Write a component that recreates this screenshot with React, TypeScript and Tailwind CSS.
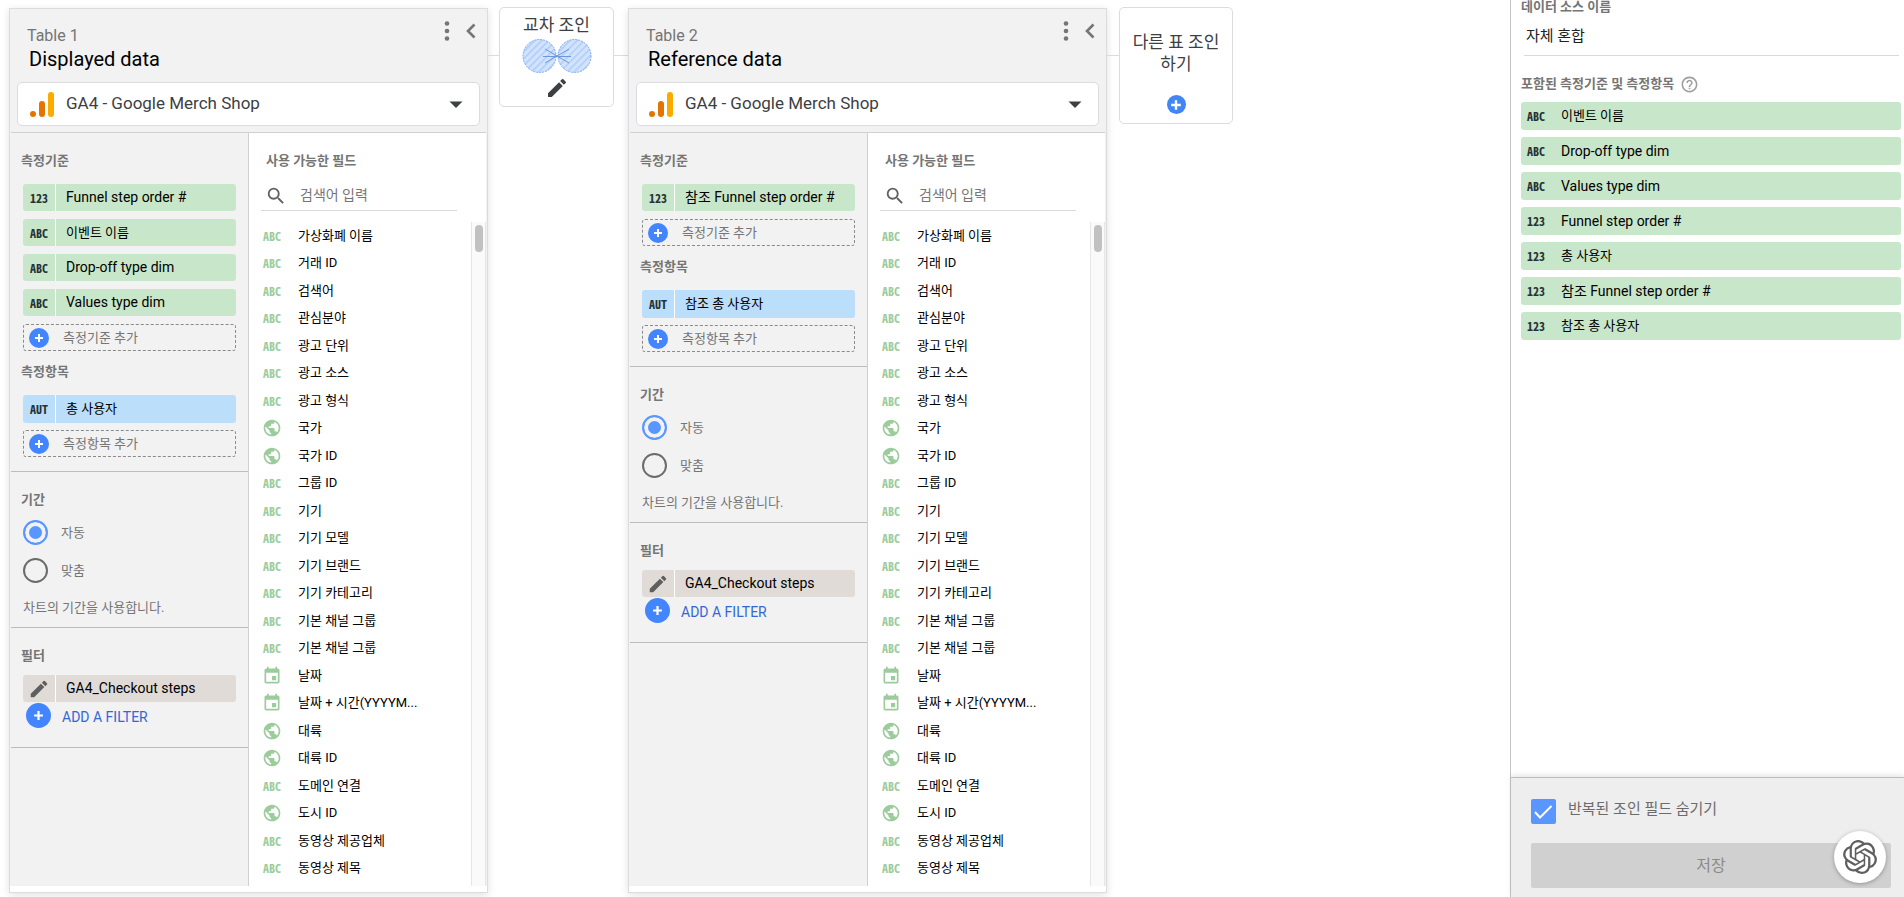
import React, { useState } from 'react';
import { MdEdit, MdEvent, MdHelpOutline, MdPublic, MdSearch } from 'react-icons/md';
import { SiOpenai } from 'react-icons/si';

type FieldType = 'ABC' | '123' | 'AUT' | 'geo' | 'date';

interface Field {
  type: FieldType;
  name: string;
}

interface BlendTable {
  id: string;
  label: string;
  name: string;
  dimensions: Field[];
  metrics: Field[];
}

const tables: BlendTable[] = [
  {
    id: 't1',
    label: 'Table 1',
    name: 'Displayed data',
    dimensions: [
      { type: '123', name: 'Funnel step order #' },
      { type: 'ABC', name: '이벤트 이름' },
      { type: 'ABC', name: 'Drop-off type dim' },
      { type: 'ABC', name: 'Values type dim' },
    ],
    metrics: [{ type: 'AUT', name: '총 사용자' }],
  },
  {
    id: 't2',
    label: 'Table 2',
    name: 'Reference data',
    dimensions: [{ type: '123', name: '참조 Funnel step order #' }],
    metrics: [{ type: 'AUT', name: '참조 총 사용자' }],
  },
];

const availableFields: Field[] = [
  { type: 'ABC', name: '가상화폐 이름' },
  { type: 'ABC', name: '거래 ID' },
  { type: 'ABC', name: '검색어' },
  { type: 'ABC', name: '관심분야' },
  { type: 'ABC', name: '광고 단위' },
  { type: 'ABC', name: '광고 소스' },
  { type: 'ABC', name: '광고 형식' },
  { type: 'geo', name: '국가' },
  { type: 'geo', name: '국가 ID' },
  { type: 'ABC', name: '그룹 ID' },
  { type: 'ABC', name: '기기' },
  { type: 'ABC', name: '기기 모델' },
  { type: 'ABC', name: '기기 브랜드' },
  { type: 'ABC', name: '기기 카테고리' },
  { type: 'ABC', name: '기본 채널 그룹' },
  { type: 'ABC', name: '기본 채널 그룹' },
  { type: 'date', name: '날짜' },
  { type: 'date', name: '날짜 + 시간(YYYYM...' },
  { type: 'geo', name: '대륙' },
  { type: 'geo', name: '대륙 ID' },
  { type: 'ABC', name: '도메인 연결' },
  { type: 'geo', name: '도시 ID' },
  { type: 'ABC', name: '동영상 제공업체' },
  { type: 'ABC', name: '동영상 제목' },
];

const includedFields: Field[] = [
  { type: 'ABC', name: '이벤트 이름' },
  { type: 'ABC', name: 'Drop-off type dim' },
  { type: 'ABC', name: 'Values type dim' },
  { type: '123', name: 'Funnel step order #' },
  { type: '123', name: '총 사용자' },
  { type: '123', name: '참조 Funnel step order #' },
  { type: '123', name: '참조 총 사용자' },
];

const nameSize = (name: string) => (/[a-z]/.test(name) ? 'text-[14px]' : 'text-[13px]');

const TypeIcon: React.FC<{ type: FieldType }> = ({ type }) => {
  if (type === 'geo') return <MdPublic className="size-5" />;
  if (type === 'date') return <MdEvent className="size-5" />;
  return (
    <span className="font-['Noto_Sans_Mono_CJK_KR','Liberation_Mono',monospace] text-[12px] leading-3 font-bold">
      {type}
    </span>
  );
};

const PlusIcon: React.FC<{ className: string }> = ({ className }) => (
  <svg viewBox="0 0 10 10" className={className} fill="none" stroke="currentColor" strokeWidth="2" aria-hidden="true">
    <path d="M5 1V9M1 5H9" />
  </svg>
);

const AnalyticsLogo: React.FC = () => (
  <svg viewBox="0 0 24 25" className="w-6 h-[25px] shrink-0" aria-hidden="true">
    <rect x="18" y="0" width="6" height="25" rx="3" fill="#f9ab00" />
    <rect x="9" y="9" width="6" height="16" rx="3" fill="#e37400" />
    <circle cx="3" cy="22" r="3" fill="#e37400" />
  </svg>
);

const VennIcon: React.FC = () => (
  <svg viewBox="0 0 70 36" className="w-[70px] h-9" aria-hidden="true">
    <defs>
      <pattern id="hatch" width="5" height="5" patternUnits="userSpaceOnUse" patternTransform="rotate(45)">
        <rect width="5" height="5" fill="#d2e3fc" />
        <rect width="1.5" height="5" fill="#aecbfa" />
      </pattern>
    </defs>
    <circle cx="17.5" cy="18" r="16.5" fill="url(#hatch)" stroke="#7baaf0" strokeDasharray="2 1" />
    <circle cx="52.5" cy="18" r="16.5" fill="url(#hatch)" stroke="#7baaf0" strokeDasharray="2 1" />
    <path d="M21 18.5H49M23 11L35 18L23 25M47 11L35 18L47 25" fill="none" stroke="#6c97dc" />
  </svg>
);

const FieldChip: React.FC<{ field: Field; className: string }> = ({ field, className }) => (
  <button type="button" className={`flex items-stretch w-full rounded-[3px] overflow-hidden text-left text-black ${className}`}>
    <span className="w-[33px] flex items-center justify-center text-[#263238] border-r border-white">
      <TypeIcon type={field.type} />
    </span>
    <span className={`flex items-center pl-[10px] whitespace-nowrap ${nameSize(field.name)}`}>{field.name}</span>
  </button>
);

const AddField: React.FC<{ label: string }> = ({ label }) => (
  <button
    type="button"
    className="flex items-center w-full h-[27px] pl-[5px] gap-[14px] border border-dashed border-[#8a8a8a] rounded-[3px] text-[13px] text-[#757575]"
  >
    <span className="size-5 rounded-full bg-[#4285ff] text-white flex items-center justify-center">
      <PlusIcon className="size-[10px]" />
    </span>
    {label}
  </button>
);

const SectionTitle: React.FC<{ children: React.ReactNode }> = ({ children }) => (
  <h3 className="-ml-[2px] text-[13px] leading-5 font-bold text-[#757575]">{children}</h3>
);

const radioClass =
  'appearance-none size-[25px] rounded-full border-2 border-[#6b6b6b] checked:border-[#5a96ff] checked:bg-[#5a96ff] checked:shadow-[inset_0_0_0_4px_#f2f2f2]';

const TableCard: React.FC<{ table: BlendTable }> = ({ table }) => {
  const [name, setName] = useState(table.name);
  const [range, setRange] = useState('auto');
  const [search, setSearch] = useState('');

  return (
    <section className="w-[479px] shrink-0 mt-px border border-[#dadce0] bg-[#f2f2f2] shadow-[0_2px_8px_rgba(0,0,0,0.12)]">
      <div className="px-px">
        <header className="border-b border-[#d0d0d0] px-[6px] pb-[6px]">
          <div className="flex justify-between pl-[10px]">
            <div className="pt-[17px] pb-[11px]">
              <p className="text-[16px] leading-5 text-[#757575]">{table.label}</p>
              <input
                aria-label="Table name"
                value={name}
                onChange={e => setName(e.target.value)}
                className="block mt-px pl-[2px] w-72 h-6 text-[20px] leading-6 text-black bg-transparent outline-none"
              />
            </div>
            <div className="flex items-start pt-3 gap-[12px] text-[#757575]">
              <button type="button" aria-label="Table options">
                <svg viewBox="0 0 6 20" className="w-[6px] h-5" fill="currentColor">
                  <circle cx="3" cy="2.5" r="2.3" />
                  <circle cx="3" cy="10" r="2.3" />
                  <circle cx="3" cy="17.5" r="2.3" />
                </svg>
              </button>
              <button type="button" aria-label="Collapse table">
                <svg viewBox="0 0 18 20" className="w-[18px] h-5" fill="none" stroke="currentColor" strokeWidth="2.6">
                  <path d="M12.5 3.5L6 10L12.5 16.5" />
                </svg>
              </button>
            </div>
          </div>
          <div className="flex items-center h-11 pl-3 pr-4 bg-white border border-[#dadce0] rounded-[5px]">
            <AnalyticsLogo />
            <select
              aria-label="Data source"
              className="flex-1 appearance-none pl-3 text-[17px] text-[#3c4043] bg-transparent outline-none"
            >
              <option>GA4 - Google Merch Shop</option>
            </select>
            <svg viewBox="0 0 14 7" className="w-[14px] h-[7px] pointer-events-none" fill="#3c4043">
              <path d="M0.5 0.5H13.5L7 7Z" />
            </svg>
          </div>
        </header>

        <div className="flex">
          <div className="w-[238px] shrink-0 border-r border-[#d0d0d0]">
            <div className="px-3 pt-[18px] pb-[14px] border-b border-[#bdbdbd]">
              <SectionTitle>측정기준</SectionTitle>
              <div className="mt-[13px] space-y-2">
                {table.dimensions.map(field => (
                  <FieldChip key={field.name} field={field} className="h-[27px] bg-[#c8e6c9]" />
                ))}
                <AddField label="측정기준 추가" />
              </div>
              <div className="mt-[11px]">
                <SectionTitle>측정항목</SectionTitle>
              </div>
              <div className="mt-[13px] space-y-[7px]">
                {table.metrics.map(field => (
                  <FieldChip key={field.name} field={field} className="h-7 bg-[#bbdefb]" />
                ))}
                <AddField label="측정항목 추가" />
              </div>
            </div>

            <div className="px-3 pt-[18px] pb-[9px] border-b border-[#bdbdbd] text-[13px] text-[#757575]">
              <SectionTitle>기간</SectionTitle>
              <label className="flex items-center gap-[13px] mt-[10px]">
                <input type="radio" name={`range-${table.id}`} checked={range === 'auto'} onChange={() => setRange('auto')} className={radioClass} />
                자동
              </label>
              <label className="flex items-center gap-[13px] mt-[13px]">
                <input type="radio" name={`range-${table.id}`} checked={range === 'custom'} onChange={() => setRange('custom')} className={radioClass} />
                맞춤
              </label>
              <p className="mt-[15px] leading-5">차트의 기간을 사용합니다.</p>
            </div>

            <div className="px-3 pt-[18px] pb-[19px] border-b border-[#bdbdbd]">
              <SectionTitle>필터</SectionTitle>
              <button type="button" className="flex items-stretch w-full h-[27px] mt-[9px] rounded-[3px] overflow-hidden bg-[#e0dbd7] text-[14px] text-black">
                <span className="w-[33px] flex items-center justify-center border-r border-white text-[#5f5f5f]">
                  <MdEdit className="size-[22px]" />
                </span>
                <span className="flex items-center pl-[10px]">GA4_Checkout steps</span>
              </button>
              <button type="button" className="flex items-center gap-[11px] mt-px ml-[3px] text-[14px] text-[#3367d6]">
                <span className="size-[25px] rounded-full bg-[#4285ff] text-white flex items-center justify-center">
                  <PlusIcon className="size-[11px]" />
                </span>
                <span className="pt-[3px]">ADD A FILTER</span>
              </button>
            </div>
          </div>

          <div className="flex-1 min-w-0 bg-white">
            <div className="pl-3 pr-[29px] pt-[18px]">
              <h3 className="pl-[5px] text-[13px] leading-5 font-bold text-[#757575]">사용 가능한 필드</h3>
              <label className="flex items-center h-8 mt-2 pt-[2px] pl-1 gap-[13px] border-b border-[#dadada]">
                <MdSearch className="size-[22px] shrink-0 text-[#616161]" />
                <input
                  aria-label="검색어 입력"
                  placeholder="검색어 입력"
                  value={search}
                  onChange={e => setSearch(e.target.value)}
                  className="flex-1 min-w-0 text-[14px] outline-none placeholder:text-[#757575]"
                />
              </label>
            </div>
            <div className="flex mt-[11px]">
              <ul className="flex-1 pl-3 pb-1">
                {availableFields.map((field, i) => (
                  <li key={i} className="flex items-center odd:h-[27px] even:h-7 text-black">
                    <span className="w-[22px] mr-[15px] flex justify-center text-[#9ccc9c]">
                      <TypeIcon type={field.type} />
                    </span>
                    <span className="text-[13px] whitespace-nowrap">{field.name}</span>
                  </li>
                ))}
              </ul>
              <div className="w-[15px] pl-[3px] pt-[3px] bg-[#fafafa] border-x border-[#e6e6e6]">
                <div className="w-2 h-[27px] rounded-full bg-[#c1c1c1]" />
              </div>
            </div>
          </div>
        </div>
      </div>
      <div className="h-[6px] bg-white" />
    </section>
  );
};

const Connector: React.FC<{ className: string }> = ({ className }) => (
  <div className={`shrink-0 h-px mt-12 bg-[#dadce0] ${className}`} />
);

export default function App() {
  const [sourceName, setSourceName] = useState('자체 혼합');
  const [hideJoin, setHideJoin] = useState(true);

  return (
    <div className="flex min-h-screen bg-white font-['Roboto','Noto_Sans_CJK_KR',sans-serif]">
      <main className="flex-1 min-w-0 flex items-start pl-[9px] pt-[7px] overflow-hidden">
        <TableCard table={tables[0]} />
        <Connector className="w-[11px]" />
        <button type="button" className="w-[115px] h-[100px] shrink-0 flex flex-col items-center pt-[6px] border border-[#dadce0] rounded-[5px] bg-white text-[#3c4043]">
          <span className="text-[17px] leading-[22px]">교차 조인</span>
          <span className="mt-[2px]">
            <VennIcon />
          </span>
          <MdEdit className="size-6 mt-[2px]" />
        </button>
        <Connector className="w-[14px]" />
        <TableCard table={tables[1]} />
        <Connector className="w-3" />
        <button type="button" className="w-[114px] h-[117px] shrink-0 flex flex-col items-center px-3 pt-[23px] border border-[#dadce0] rounded-[5px] bg-white text-[17px] leading-[22px] text-[#3c4043]">
          다른 표 조인하기
          <span className="size-[19px] mt-[20px] rounded-full bg-[#4285f4] text-white flex items-center justify-center">
            <PlusIcon className="size-3" />
          </span>
        </button>
      </main>

      <aside className="w-[394px] shrink-0 flex flex-col border-l border-[#c4c4c4] bg-white">
        <div className="flex-1 pl-[10px] pr-[3px]">
          <label htmlFor="source-name" className="block text-[13px] leading-[14px] font-bold text-[#757575]">
            데이터 소스 이름
          </label>
          <div className="ml-[3px] mr-[2px] border-b border-[#dadada]">
            <input
              id="source-name"
              value={sourceName}
              onChange={e => setSourceName(e.target.value)}
              className="block w-full h-[30px] mt-[5px] mb-[6px] pl-[2px] text-[15px] text-[#212121] outline-none"
            />
          </div>
          <div className="flex items-center gap-[6px] h-[46px] pt-[10px] text-[#757575]">
            <h3 className="text-[13px] leading-5 font-bold">포함된 측정기준 및 측정항목</h3>
            <MdHelpOutline className="size-[19px] text-[#9e9e9e]" />
          </div>
          <ul className="space-y-[7px]">
            {includedFields.map(field => (
              <li key={field.name} className="flex items-center h-7 pl-[6px] rounded-[3px] bg-[#c8e6c9]">
                <span className="w-[18px] mr-4 flex justify-center text-[#263238]">
                  <TypeIcon type={field.type} />
                </span>
                <span className={`whitespace-nowrap text-black ${nameSize(field.name)}`}>{field.name}</span>
              </li>
            ))}
          </ul>
        </div>

        <footer className="pl-5 pr-[13px] pt-[21px] pb-[9px] border-t border-[#bdbdbd] bg-[#eee] shadow-[0_-2px_5px_rgba(0,0,0,0.1)]">
          <label className="flex items-start gap-3 text-[15px] leading-5 text-[#6b6b6b]">
            <span className="grid">
              <input
                type="checkbox"
                checked={hideJoin}
                onChange={e => setHideJoin(e.target.checked)}
                className="peer appearance-none col-start-1 row-start-1 size-[25px] rounded-[2px] border-2 border-[#6b6b6b] checked:border-[#5a96ff] checked:bg-[#5a96ff]"
              />
              <svg viewBox="0 0 25 25" className="col-start-1 row-start-1 size-[25px] pointer-events-none hidden peer-checked:block" fill="none" stroke="white" strokeWidth="2">
                <path d="M4 13L9 18.5L20.5 7" />
              </svg>
            </span>
            반복된 조인 필드 숨기기
          </label>
          <div className="relative mt-[19px]">
            <button type="button" disabled className="w-full h-[45px] rounded-[2px] bg-[#d0d0d0] text-[16px] text-[#8a8a8a]">
              저장
            </button>
            <button
              type="button"
              aria-label="ChatGPT"
              className="absolute right-[5px] -top-[12px] size-[52px] rounded-full bg-white shadow-[0_1px_4px_rgba(0,0,0,0.3)] text-[#5f5f5f] flex items-center justify-center"
            >
              <SiOpenai className="size-[34px]" />
            </button>
          </div>
        </footer>
      </aside>
    </div>
  );
}
